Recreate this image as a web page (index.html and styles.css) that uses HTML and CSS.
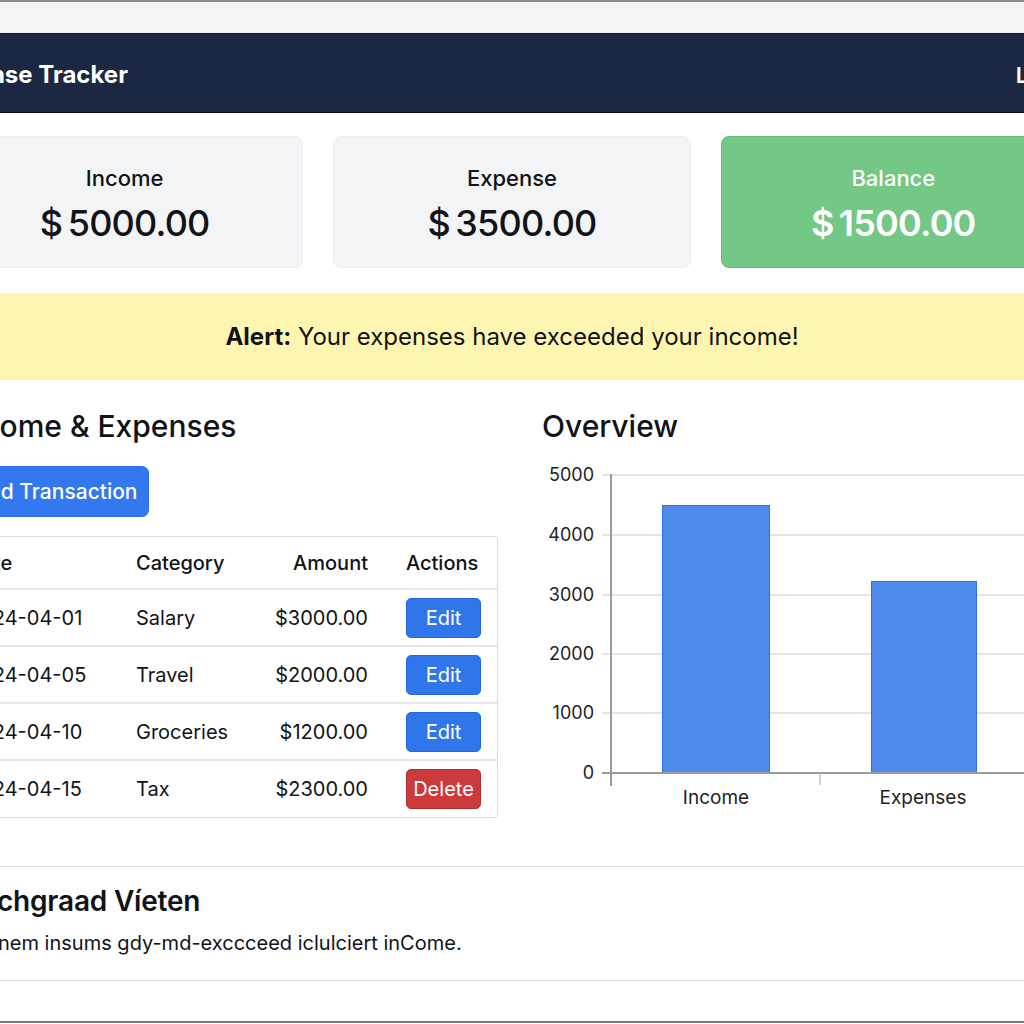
FILE: index.html
```html
<!DOCTYPE html>
<html lang="en">
<head>
<meta charset="utf-8">
<title>Expense Tracker</title>
<link rel="stylesheet" href="styles.css">
</head>
<body>
<div class="chrome"></div>
<header class="nav">
  <div class="nav-inner">
    <div class="brand">Expense Tracker</div>
    <div class="logout">Logout</div>
  </div>
</header>
<main class="page">
  <section class="cards">
    <div class="card"><div class="label">Income</div><div class="value">$&thinsp;5000.00</div></div>
    <div class="card"><div class="label">Expense</div><div class="value">$&thinsp;3500.00</div></div>
    <div class="card balance"><div class="label">Balance</div><div class="value">$&thinsp;1500.00</div></div>
  </section>
  <div class="alert"><b>Alert:</b>&nbsp;Your expenses have exceeded your income!</div>
  <section class="main">
    <div class="left">
      <h2>Income &amp; Expenses</h2>
      <button class="btn-add">Add Transaction</button>
      <div class="table-wrap">
        <table>
          <colgroup><col class="c1"><col class="c2"><col class="c3"><col class="c4"></colgroup>
          <thead>
            <tr><th class="t-date">Date</th><th>Category</th><th class="num">Amount</th><th class="act">Actions</th></tr>
          </thead>
          <tbody>
            <tr><td class="t-date">2024-04-01</td><td>Salary</td><td class="num">$3000.00</td><td class="act"><button class="btn edit">Edit</button></td></tr>
            <tr><td class="t-date">2024-04-05</td><td>Travel</td><td class="num">$2000.00</td><td class="act"><button class="btn edit">Edit</button></td></tr>
            <tr><td class="t-date">2024-04-10</td><td>Groceries</td><td class="num">$1200.00</td><td class="act"><button class="btn edit">Edit</button></td></tr>
            <tr><td class="t-date">2024-04-15</td><td>Tax</td><td class="num">$2300.00</td><td class="act"><button class="btn del">Delete</button></td></tr>
          </tbody>
        </table>
      </div>
    </div>
    <div class="right">
      <h2>Overview</h2>
      <svg class="chart" width="540" height="370" viewBox="0 0 540 370">
        <g class="grid">
          <line x1="60" y1="20" x2="540" y2="20"/>
          <line x1="60" y1="80" x2="540" y2="80"/>
          <line x1="60" y1="140" x2="540" y2="140"/>
          <line x1="60" y1="199" x2="540" y2="199"/>
          <line x1="60" y1="258" x2="540" y2="258"/>
        </g>
        <g class="ylab">
          <text x="52" y="26">5000</text>
          <text x="52" y="86">4000</text>
          <text x="52" y="146">3000</text>
          <text x="52" y="205">2000</text>
          <text x="52" y="264">1000</text>
          <text x="52" y="324">0</text>
        </g>
        <rect class="bar" x="120.5" y="50.5" width="107" height="267.5"/>
        <rect class="bar" x="329.5" y="126.5" width="105" height="191.5"/>
        <g class="axis">
          <line x1="69" y1="19" x2="69" y2="331"/>
          <line x1="60" y1="318" x2="540" y2="318"/>
          <line class="tick" x1="278" y1="318" x2="278" y2="330"/>
        </g>
        <g class="xlab">
          <text x="174" y="349">Income</text>
          <text x="381" y="349">Expenses</text>
        </g>
      </svg>
    </div>
  </section>
</main>
<section class="notes">
  <h3>chgraad Víeten</h3>
  <p>nem insums gdy-md-exccceed iclulciert inCome.</p>
</section>
<div class="footer"></div>
</body>
</html>
```
FILE: styles.css
```css
* { box-sizing: border-box; }

body {
  margin: 0;
  width: 1024px;
  height: 1024px;
  overflow: hidden;
  background: #ffffff;
  color: #111318;
  font-family: Inter, "Noto Sans", "Liberation Sans", sans-serif;
}

.chrome {
  height: 34px;
  background: #f4f4f4;
  border-top: 2px solid #8c8c8c;
  border-bottom: 1px solid #1a1a1a;
}

.nav {
  height: 79px;
  background: #1c2741;
  border-bottom: 1px solid #0b101b;
}

.nav-inner {
  display: flex;
  align-items: center;
  justify-content: space-between;
  height: 100%;
  margin: 0 -66px 0 -68px;
  padding-top: 3px;
  color: #ffffff;
}

.brand {
  font-size: 24px;
  font-weight: 700;
}

.logout {
  font-size: 22px;
  font-weight: 600;
}

.page {
  margin: 0 -54px;
}

.cards {
  display: grid;
  grid-template-columns: repeat(3, 1fr);
  gap: 30px;
  margin-top: 23px;
}

.card {
  display: flex;
  flex-direction: column;
  align-items: center;
  gap: 10px;
  padding: 28px 0 22px;
  background: #f3f4f6;
  border: 1px solid #eceef1;
  border-radius: 8px;
}

.label {
  font-size: 22px;
  line-height: 26px;
  font-weight: 500;
}

.value {
  font-size: 36px;
  line-height: 44px;
  font-weight: 500;
  letter-spacing: -0.8px;
}

.card.balance {
  padding-right: 12px;
  background: #72c884;
  border-color: #5fbe71;
  color: #ffffff;
}

.card.balance .value { font-weight: 600; }

.alert {
  display: flex;
  align-items: center;
  justify-content: center;
  height: 87px;
  margin-top: 25px;
  background: #fef6b0;
  font-size: 24px;
}

.alert b { font-weight: 700; }

.main {
  display: grid;
  grid-template-columns: 542px 1fr;
  gap: 44px;
  margin-top: 28px;
  padding-left: 10px;
}

h2 {
  margin: 0;
  font-size: 30px;
  line-height: 36px;
  font-weight: 500;
}

.btn-add {
  display: block;
  height: 51px;
  margin-top: 22px;
  padding: 0 10px 0 16px;
  background: #3478ef;
  border: 1px solid #2a6ee6;
  border-radius: 7px;
  color: #ffffff;
  font-family: inherit;
  font-size: 21px;
  font-weight: 500;
}

.table-wrap {
  margin-top: 19px;
  border: 1px solid #d9dbe0;
  border-radius: 4px;
  overflow: hidden;
}

table {
  width: 100%;
  border-collapse: collapse;
  table-layout: fixed;
  font-size: 20px;
}

col.c1 { width: 167px; }
col.c2 { width: 127px; }
col.c3 { width: 144px; }
col.c4 { width: auto; }

th, td {
  padding: 0 0 0 12px;
  text-align: left;
  white-space: nowrap;
}

th {
  height: 52px;
  font-weight: 500;
}

td {
  height: 57px;
  border-top: 2px solid #e6e7ea;
  font-weight: 400;
}

.t-date { padding-left: 11px; }

.num {
  text-align: right;
  padding: 0 27px 0 0;
}

.act { padding-left: 11px; }

.btn {
  display: block;
  width: 75px;
  height: 40px;
  padding: 0;
  border-radius: 5px;
  color: #ffffff;
  font-family: inherit;
  font-size: 20px;
  font-weight: 400;
}

.btn.edit {
  background: #2f76ea;
  border: 1px solid #2568dd;
}

.btn.del {
  background: #cc3b3b;
  border: 1px solid #b32f2f;
}

.chart {
  display: block;
  margin-top: 11px;
  overflow: visible;
}

.grid line {
  stroke: #dcdcdc;
  stroke-width: 1.5;
}

.axis line {
  stroke: #9a9a9a;
  stroke-width: 2;
}

.axis .tick { stroke: #c4c4c4; stroke-width: 1.5; }

.ylab text {
  font-family: Inter, "Noto Sans", sans-serif;
  font-size: 18px;
  fill: #1e1e1e;
  text-anchor: end;
}

.xlab text {
  font-family: Inter, "Noto Sans", sans-serif;
  font-size: 19px;
  fill: #1e1e1e;
  text-anchor: middle;
}

.bar {
  fill: #4f8bec;
  stroke: #2f6fe8;
  stroke-width: 1;
}

.notes {
  margin-top: 41px;
  padding: 18px 0 24px;
  border-top: 1px solid #d8dbe0;
  border-bottom: 1px solid #d8dbe0;
}

.notes h3 {
  margin: 0 0 12px -3px;
  font-size: 28px;
  line-height: 33px;
  font-weight: 600;
  letter-spacing: -0.2px;
}

.notes p {
  margin: 0 0 0 -2px;
  font-size: 20px;
  line-height: 26px;
}

.footer {
  height: 42px;
  border-bottom: 2px solid #777777;
}
```
